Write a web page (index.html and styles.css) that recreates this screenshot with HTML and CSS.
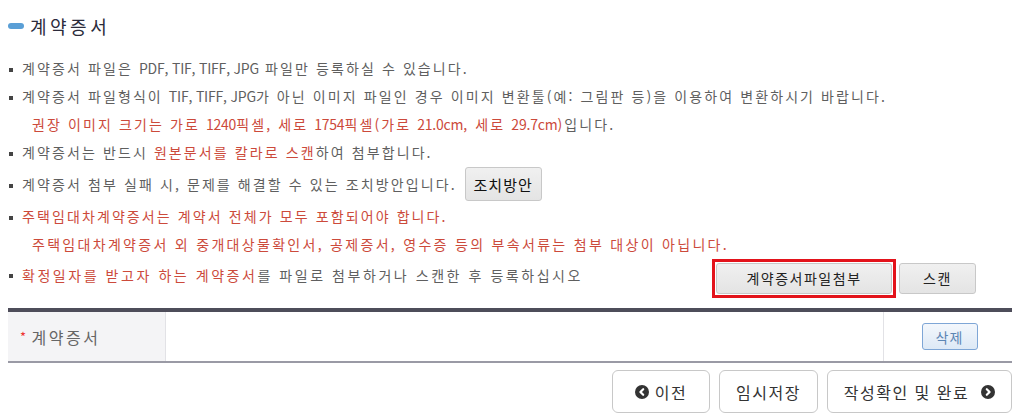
FILE: index.html
```html
<!DOCTYPE html>
<html lang="ko">
<head>
<meta charset="utf-8">
<link rel="stylesheet" href="styles.css">
</head>
<body>
<div class="page">
  <h2 class="title"><span class="pill"></span>계약증서</h2>
  <ul class="notes">
    <li><span class="txt">계약증서 파일은 <span class="en">PDF, TIF, TIFF, JPG</span> 파일만 등록하실 수 있습니다.</span></li>
    <li><span class="txt">계약증서 파일형식이 <span class="en">TIF, TIFF, JPG</span>가 아닌 이미지 파일인 경우 이미지 변환툴(예: 그림판 등)을 이용하여 변환하시기 바랍니다.</span></li>
    <li class="sub"><span class="txt"><span class="red">권장 이미지 크기는 가로 <span class="en">1240</span>픽셀, 세로 <span class="en">1754</span>픽셀(가로 <span class="en">21.0cm</span>, 세로 <span class="en">29.7cm</span>)</span>입니다.</span></li>
    <li><span class="txt">계약증서는 반드시 <span class="red">원본문서를 칼라로 스캔</span>하여 첨부합니다.</span></li>
    <li class="with-btn"><span class="txt">계약증서 첨부 실패 시, 문제를 해결할 수 있는 조치방안입니다.</span><button class="btn-grey btn-fix">조치방안</button></li>
    <li><span class="txt red">주택임대차계약증서는 계약서 전체가 모두 포함되어야 합니다.</span></li>
    <li class="sub"><span class="txt red wide">주택임대차계약증서 외 중개대상물확인서, 공제증서, 영수증 등의 부속서류는 첨부 대상이 아닙니다.</span></li>
    <li class="last"><span class="txt wider"><span class="red">확정일자를 받고자 하는 계약증서</span>를 파일로 첨부하거나 스캔한 후 등록하십시오</span>
      <div class="actions">
        <span class="highlight"><button class="btn-grey btn-attach">계약증서파일첨부</button></span>
        <button class="btn-grey btn-scan">스캔</button>
      </div>
    </li>
  </ul>

  <div class="file-table">
    <div class="th"><span class="req">*</span> 계약증서</div>
    <div class="td"></div>
    <div class="td-action"><button class="btn-del">삭제</button></div>
  </div>

  <div class="nav">
    <button class="nav-btn btn-prev"><span class="circle"><svg viewBox="0 0 14 14" width="14" height="14"><circle cx="7" cy="7" r="7" fill="#333"/><path d="M8.2 4.2 L5.4 7 L8.2 9.8" fill="none" stroke="#fff" stroke-width="2.2" stroke-linecap="round" stroke-linejoin="round"/></svg></span>이전</button>
    <button class="nav-btn btn-temp">임시저장</button>
    <button class="nav-btn btn-done">작성확인 및 완료<span class="circle right"><svg viewBox="0 0 14 14" width="14" height="14"><circle cx="7" cy="7" r="7" fill="#333"/><path d="M5.8 4.2 L8.6 7 L5.8 9.8" fill="none" stroke="#fff" stroke-width="2.2" stroke-linecap="round" stroke-linejoin="round"/></svg></span></button>
  </div>
</div>
</body>
</html>
```

FILE: styles.css
```css
* { box-sizing: border-box; }
html, body { margin: 0; padding: 0; background: #fff; }
body {
  font-family: "Noto Sans CJK KR", "Noto Sans", sans-serif;
  color: #5f5f5f;
}
.page {
  padding: 12px 12px 0 8px;
  width: 1024px;
}
.title {
  margin: 0;
  height: 28px;
  display: flex;
  align-items: center;
  font-size: 18px;
  font-weight: normal;
  letter-spacing: 3.5px;
  color: #2b2b3b;
}
.pill {
  display: inline-block;
  width: 16px;
  height: 6px;
  border-radius: 3px;
  background: #5a9fd6;
  margin-right: 6px;
}
.notes {
  list-style: none;
  margin: 14px 0 0 0;
  padding: 0;
  font-size: 14px;
}
.notes li {
  display: flex;
  align-items: center;
  min-height: 28px;
  position: relative;
  padding-left: 14px;
}
.notes li::before {
  content: "";
  position: absolute;
  left: 1px;
  top: 14px;
  width: 4px;
  height: 4px;
  background: #444;
}
.notes li.sub { padding-left: 24px; }
.notes li.sub::before { display: none; }
.txt { white-space: nowrap; letter-spacing: 2.1px; }
.txt.wide { letter-spacing: 2.3px; }
.txt.wider { letter-spacing: 2.55px; }
.en { letter-spacing: -0.2px; }
.red { color: #cc4a3b; }

.btn-grey {
  font-family: inherit;
  background: linear-gradient(#f0f0f0, #e4e4e4);
  border: 1px solid #c8c8c8;
  border-radius: 3px;
  color: #222;
  cursor: pointer;
  padding: 0;
}
.with-btn { height: 36px; }
.btn-fix {
  margin-left: 8px;
  width: 77px;
  height: 34px;
  font-size: 15px;
  font-weight: normal;
  color: #111;
  letter-spacing: 1px;
}
.with-btn::before { top: 18px !important; }
.last { height: 40px; }
.last::before { top: 16px !important; }
.last .txt { margin-top: -6px; }
.actions {
  margin-left: auto;
  margin-right: 36px;
  display: flex;
  align-items: center;
  gap: 3px;
}
.highlight {
  display: inline-flex;
  border: 3px solid #e3131b;
  padding: 1px;
}
.btn-attach {
  width: 176px;
  height: 31px;
  font-size: 14px;
  letter-spacing: 1.5px;
}
.btn-scan {
  width: 77px;
  height: 31px;
  font-size: 14px;
  letter-spacing: 1.5px;
}

.file-table {
  margin-top: 10px;
  display: flex;
  border-top: 4px solid #4e4d5a;
  border-bottom: 2px solid #9a9aa5;
  height: 55px;
}
.th {
  width: 158px;
  background: #f4f4f6;
  border-right: 1px solid #e2e2e6;
  display: flex;
  align-items: center;
  padding-left: 12px;
  font-size: 16px;
  letter-spacing: 2.5px;
  color: #666;
}
.req { color: #e33; font-size: 13px; margin-right: 3px; }
.td { flex: 1; }
.td-action {
  width: 129px;
  border-left: 1px solid #e2e2e6;
  display: flex;
  align-items: center;
  justify-content: center;
}
.btn-del {
  font-family: inherit;
  width: 56px;
  height: 27px;
  padding: 0;
  margin-left: 3px;
  border: 1px solid #7ea6d6;
  border-radius: 3px;
  background: linear-gradient(#f3f7fc, #dde9f6);
  color: #5c86b4;
  font-size: 14px;
  letter-spacing: 1px;
}

.nav {
  margin-top: 7px;
  display: flex;
  justify-content: flex-end;
  gap: 9px;
}
.nav-btn {
  font-family: inherit;
  height: 43px;
  background: #fff;
  border: 1px solid #c8c8c8;
  border-radius: 6px;
  font-size: 16px;
  color: #333;
  letter-spacing: 1.5px;
  display: inline-flex;
  align-items: center;
  justify-content: center;
  padding: 0;
}
.btn-prev { width: 98px; }
.btn-temp { width: 99px; }
.btn-done { width: 185px; }
.circle { display: inline-flex; margin-right: 6px; }
.circle.right { margin-right: 0; margin-left: 12px; }
```
